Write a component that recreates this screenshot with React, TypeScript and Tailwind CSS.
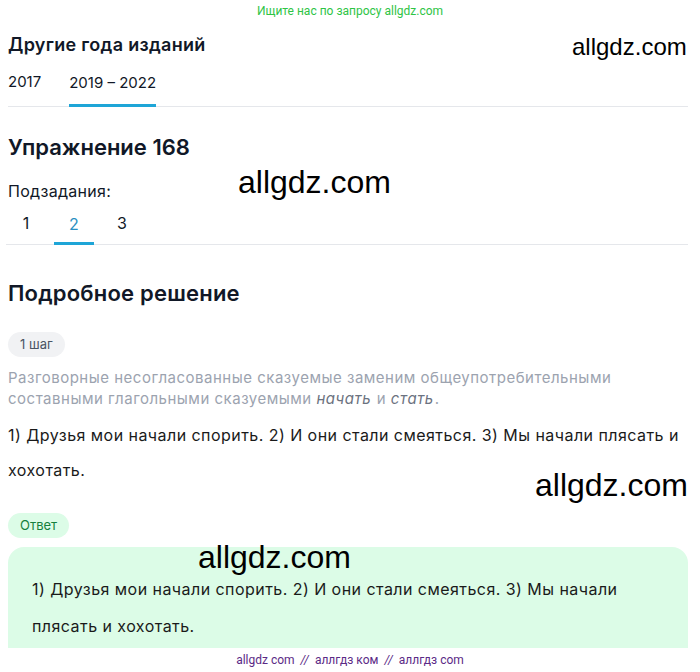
import React from "react";

const wm = "absolute font-['Liberation_Sans',Arial,sans-serif] text-black leading-none whitespace-nowrap";

export default function App() {
  return (
    <div className="relative w-[700px] h-[672px] overflow-hidden bg-white font-['Inter',sans-serif] text-[#111827]">
      <div className="h-[22px] flex items-center justify-center text-[12px] text-[#2ec445] font-['Roboto',sans-serif]">
        Ищите нас по запросу allgdz.com
      </div>

      <div className="px-2 w-[696px]">
        <h2 className="mt-[9px] text-[18px] leading-[28px] font-semibold tracking-[0.3px]">Другие года изданий</h2>
        <div className="flex h-[48px] items-end border-b border-[#e5e7eb] text-[15px] leading-[24px]">
          <div className="pb-[12px] pr-[28px]">2017</div>
          <div className="pb-[9px] border-b-[3px] border-[#1ea5d7] mb-[-1px]">2019 – 2022</div>
        </div>

        <h1 className="mt-[25px] text-[22px] leading-[30px] font-semibold">Упражнение 168</h1>
        <div className="mt-[17px] text-[16px] leading-[24px] tracking-[0.3px]">Подзадания:</div>
        <div className="flex gap-2 ml-[-2px] h-[42px] items-end border-b border-[#e5e7eb] text-[16px] leading-[24px]">
          <div className="w-10 text-center pb-[9px]">1</div>
          <div className="w-10 text-center pb-[6px] border-b-[3px] border-[#1ea5d7] mb-[-1px] text-[#2a8fc2]">2</div>
          <div className="w-10 text-center pb-[9px]">3</div>
        </div>

        <h2 className="mt-[33px] text-[22px] leading-[30px] font-semibold tracking-[0.2px]">Подробное решение</h2>
        <div className="mt-[24px] inline-flex h-[25px] items-center rounded-full bg-[#f1f2f4] px-[12px] text-[13px] text-[#4b5563]">
          1 шаг
        </div>
        <p className="mt-[10px] text-[15px] leading-[21px] text-[#9ca3af] tracking-[0.5px]">
          Разговорные несогласованные сказуемые заменим общеупотребительными составными глагольными сказуемыми{" "}
          <i className="text-[#6b7280] pr-[1px]">начать</i> и <i className="text-[#6b7280] pr-[1px]">стать</i>.
        </p>
        <p className="mt-[9px] text-[16px] leading-[35px] text-[#1a1a1a] tracking-[0.45px]">
          1) Друзья мои начали спорить. 2) И они стали смеяться. 3) Мы начали плясать и хохотать.
        </p>
        <div className="mt-[25px] inline-flex h-[25px] items-center rounded-full bg-[#dcfce7] px-[12px] text-[13px] text-[#15803d]">
          Ответ
        </div>
        <div className="mt-[9px] rounded-t-[16px] bg-[#dcfce7] pl-6 pr-6 pt-[24px] pb-[30px] text-[16px] leading-[37px] text-[#1a1a1a] tracking-[0.45px]">
          1) Друзья мои начали спорить. 2) И они стали смеяться. 3) Мы начали плясать и хохотать.
        </div>
      </div>

      <div className={wm + " left-[572px] top-[35px] text-[24px]"}>allgdz.com</div>
      <div className={wm + " left-[238px] top-[166px] text-[32px]"}>allgdz.com</div>
      <div className={wm + " left-[535px] top-[469px] text-[32px]"}>allgdz.com</div>
      <div className={wm + " left-[198px] top-[541px] text-[32px]"}>allgdz.com</div>

      <div className="absolute left-0 bottom-0 w-full h-[24px] bg-white flex items-center justify-center gap-[6px] text-[12px] text-[#5b2a86] font-['Roboto',sans-serif]">
        <span>allgdz com</span>
        <span className="italic">//</span>
        <span>аллгдз ком</span>
        <span className="italic">//</span>
        <span>аллгдз com</span>
      </div>
    </div>
  );
}
